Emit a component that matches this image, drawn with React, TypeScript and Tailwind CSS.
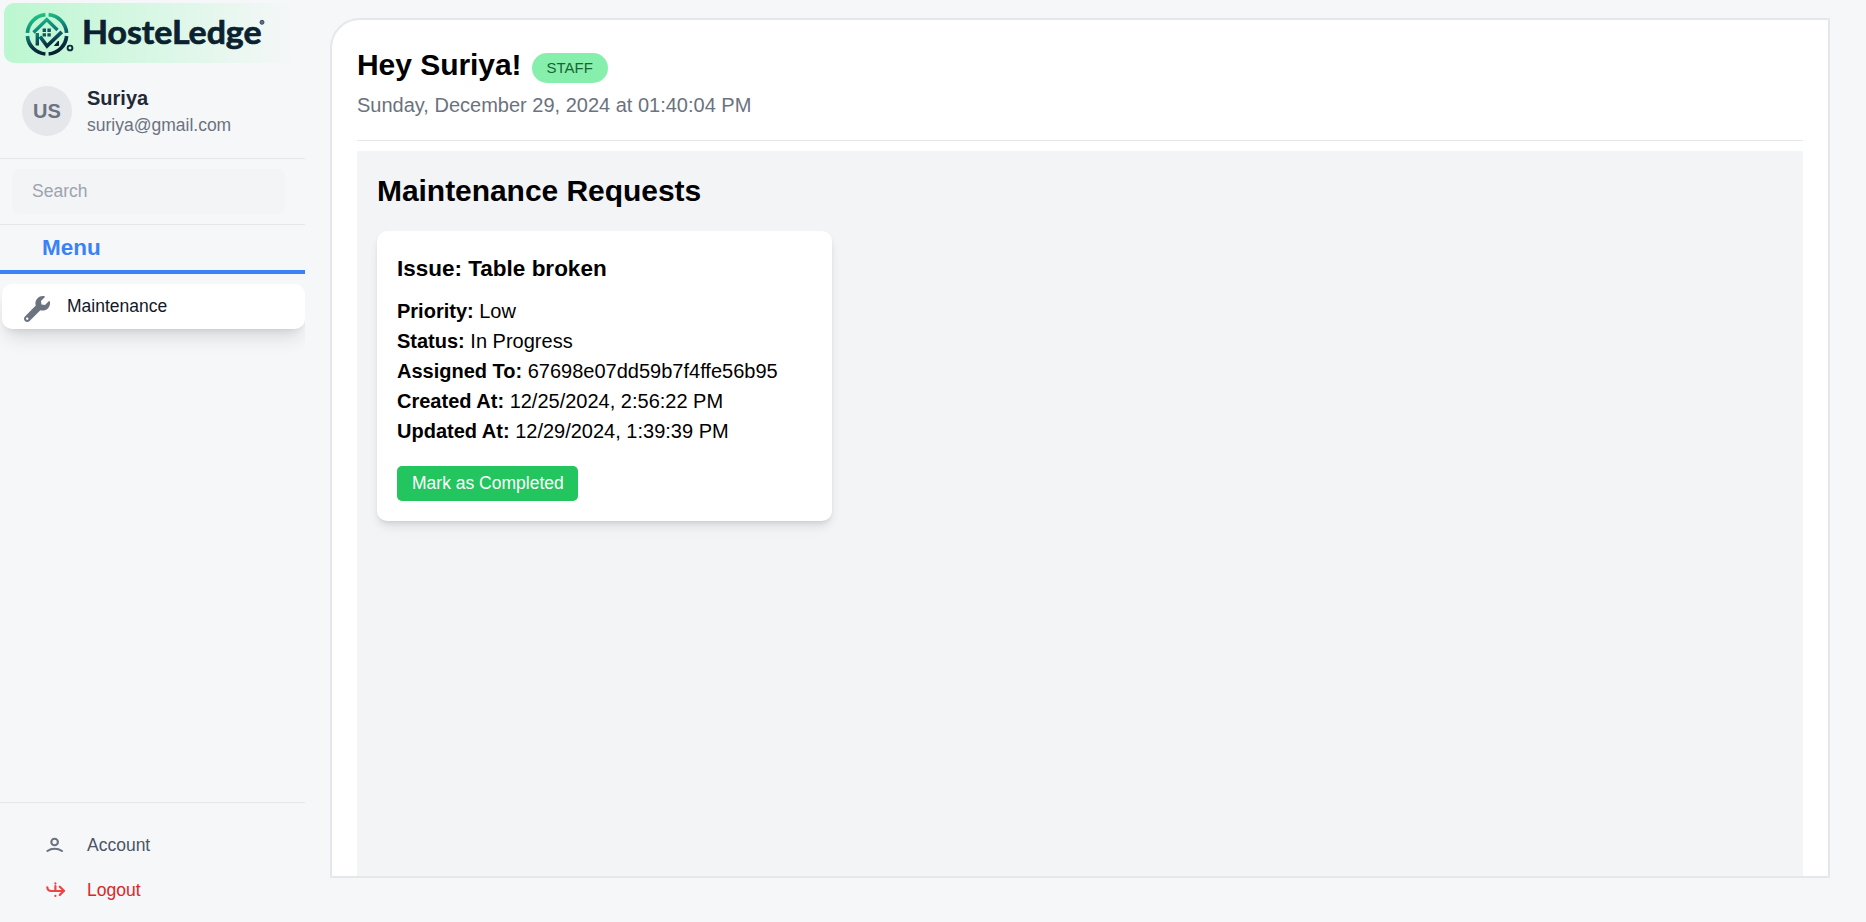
import React from "react";
import { FaWrench } from "react-icons/fa";

function Logo() {
  return (
    <svg className="h-[60px] w-[293px]" viewBox="4 3 293 60" fill="none">
      <defs>
        <linearGradient id="ring" x1="34" y1="13" x2="46" y2="56" gradientUnits="userSpaceOnUse">
          <stop offset="0" stopColor="#22cd86" />
          <stop offset="0.45" stopColor="#0d8079" />
          <stop offset="0.75" stopColor="#0a3145" />
          <stop offset="1" stopColor="#08202f" />
        </linearGradient>
      </defs>
      <g stroke="url(#ring)">
        <path
          d="M27.4 32.8A19.700 19.700 0 0 1 45.400 14.700M48.600 14.700A19.700 19.700 0 0 1 66.600 32.800M66.600 36A19.700 19.700 0 0 1 48.600 54M45.400 54A19.700 19.700 0 0 1 27.400 36"
          strokeWidth="3.700"
        />
        <path d="M33.500 32.500L46.800 19.500L57.500 30" strokeWidth="3.300" />
        <path d="M37.300 33v12.500" strokeWidth="3.400" />
        <path d="M40 36.500L47 46L61.800 31.800" strokeWidth="3.700" />
        <path d="M54.500 45.500L58.500 41V45.500Z" fill="#08202f" stroke="#08202f" strokeWidth="1" />
      </g>
      <path d="M42.600 28.500h3.400v3.400h-3.400zM47.400 28.500h3.400v3.400h-3.400zM42.600 33.200h3.400v3.200h-3.400zM47.400 33.200h3.400v3.200h-3.400z" fill="#0c5563" />
      <circle cx="70" cy="48" r="2.400" stroke="#0a2a3d" strokeWidth="1.900" />
      <text
        x="82"
        y="43.600"
        textLength="179.500"
        lengthAdjust="spacingAndGlyphs"
        fontFamily="Lato, sans-serif"
        fontWeight="700"
        fontSize="33"
        fill="#0a2230"
        stroke="#0a2230"
        strokeWidth="0.700"
      >
        HosteLedge
      </text>
      <circle cx="262" cy="22.300" r="2" fill="#5d7387" stroke="#2b4257" strokeWidth="0.900" />
    </svg>
  );
}

function AccountIcon() {
  return (
    <svg className="mr-[21px] size-5" viewBox="0 0 20 20" fill="none" stroke="#6b7280" strokeWidth="2.100" strokeLinecap="round">
      <circle cx="8.600" cy="7" r="3.300" />
      <path d="M1.400 16C5.500 13 11.700 13 16 16" />
    </svg>
  );
}

function LogoutIcon() {
  return (
    <svg className="mr-[21px] size-5" viewBox="0 0 20 20" fill="none" stroke="#ef4444" strokeWidth="2.200" strokeLinecap="round" strokeLinejoin="round">
      <path d="M1.300 7.300C1.400 9.600 2.700 11 5.200 11H17.600" />
      <path d="M13.800 6.700L18 10.800L13.800 14.900" />
      <path d="M9.400 3.300V3.600M9.400 6.200V10.500M9.400 15.800V16" />
    </svg>
  );
}

const details = [
  ["Priority:", "Low"],
  ["Status:", "In Progress"],
  ["Assigned To:", "67698e07dd59b7f4ffe56b95"],
  ["Created At:", "12/25/2024, 2:56:22 PM"],
  ["Updated At:", "12/29/2024, 1:39:39 PM"],
];

export default function App() {
  return (
    <div className="flex h-[922px] w-full overflow-hidden bg-[#f6f7f9] text-[20px] leading-[30px] text-black [font-family:'Liberation_Sans',Arial,sans-serif]">
      <aside className="flex w-[305px] shrink-0 flex-col overflow-hidden">
        <div className="mt-[3px] ml-1 flex h-[60px] w-[293px] shrink-0 rounded-[10px] bg-linear-to-r/srgb from-[#bbf7d0] to-[#f6f7f9]">
          <Logo />
        </div>
        <div className="flex h-[95px] shrink-0 items-center pl-[22px]">
          <div className="flex size-[50px] items-center justify-center rounded-full bg-[#e5e7eb] font-bold text-[#6b7280]">US</div>
          <div className="ml-[15px]">
            <div className="leading-[28px] font-bold text-[#1f2937]">Suriya</div>
            <div className="pt-px text-[17.5px] leading-[24px] text-[#6b7280]">suriya@gmail.com</div>
          </div>
        </div>
        <div className="border-y border-[#e5e7eb] py-[10px] pl-3">
          <input
            placeholder="Search"
            className="block h-[45px] w-[273px] rounded-[7px] bg-[#f3f4f6] px-5 text-[17.5px] outline-none placeholder:text-[#9ca3af]"
          />
        </div>
        <h3 className="h-[49px] border-b-4 border-[#3b82f6] pt-[5px] pl-[42px] text-[22.5px] leading-[35px] font-bold text-[#3b82f6]">Menu</h3>
        <nav className="flex-1 pt-[10px] pl-[2px]">
          <a className="flex h-[45px] items-center rounded-[10px] bg-white pl-[22px] text-[17.5px] text-[#111827] shadow-[0_12px_19px_-4px_rgba(0,0,0,0.12),0_5px_8px_-5px_rgba(0,0,0,0.12)]">
            <FaWrench className="mt-[5px] mr-[17px] size-[26px] text-[#6b7280]" />
            <span className="pb-[2px]">Maintenance</span>
          </a>
        </nav>
        <div className="h-[120px] border-t border-[#e5e7eb] pt-[19px] text-[17.5px]">
          <a className="flex h-[45px] items-center pl-[46px] text-[#4b5563]">
            <AccountIcon />
            Account
          </a>
          <a className="flex h-[45px] items-center pl-[46px] text-[#dc2626]">
            <LogoutIcon />
            Logout
          </a>
        </div>
      </aside>
      <main className="mt-[18px] ml-[25px] flex h-[860px] w-[1500px] flex-col rounded-tl-[30px] border-2 border-[#e5e7eb] bg-white px-[25px] pt-[25px]">
        <header className="border-b border-[#e5e7eb] pb-5">
          <div className="flex h-[45px] items-start">
            <h1 className="text-[30px] leading-[40px] font-bold tracking-[-0.05px]">Hey Suriya!</h1>
            <span className="mt-2 ml-[10px] rounded-full bg-[#86efac] px-[15px] py-[5px] text-[15px] leading-[20px] text-[#166534]">STAFF</span>
          </div>
          <p className="text-[#6b7280]">Sunday, December 29, 2024 at 01:40:04 PM</p>
        </header>
        <section className="mt-[10px] flex-1 bg-[#f3f4f6] p-5">
          <h2 className="mb-5 text-[30px] leading-[40px] font-bold tracking-[-0.05px]">Maintenance Requests</h2>
          <div className="grid grid-cols-3 gap-5">
            <article className="rounded-[10px] bg-white p-5 shadow-[0_5px_8px_-1px_rgba(0,0,0,0.08),0_3px_5px_-2px_rgba(0,0,0,0.08),0_10px_15px_-3px_rgba(0,0,0,0.04)]">
              <h3 className="mb-[10px] text-[22.5px] leading-[35px] font-bold">Issue: Table broken</h3>
              {details.map(([label, value]) => (
                <p key={label}>
                  <strong>{label}</strong> {value}
                </p>
              ))}
              <button className="mt-5 block rounded-[5px] bg-[#22c55e] pr-[14px] pl-[15px] py-[5px] text-[17.5px] leading-[25px] text-white">Mark as Completed</button>
            </article>
          </div>
        </section>
      </main>
    </div>
  );
}
